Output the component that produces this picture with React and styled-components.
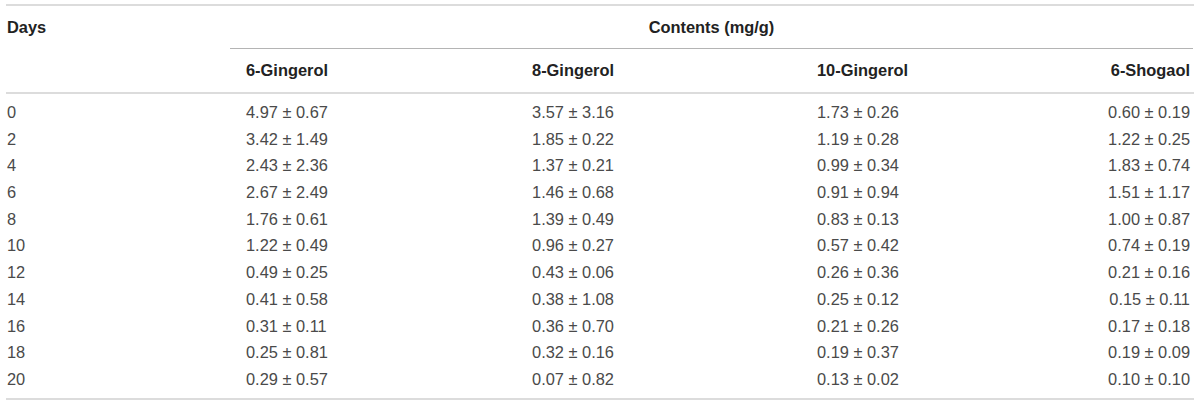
import React from "react";
import styled, { createGlobalStyle } from "styled-components";

const GlobalStyle = createGlobalStyle`
  body {
    margin: 0;
    background: #fff;
    font-family: "Liberation Sans", Arial, sans-serif;
  }
`;

const COLUMNS = "224px 115px 456px 199px 194px";

const Page = styled.div`
  padding: 4px 6px 0 6px;
  width: 1188px;
`;

const Table = styled.div`
  border-top: 2px solid #dcdcdc;
  border-bottom: 2px solid #dcdcdc;
`;

const Head = styled.div`
  display: grid;
  grid-template-columns: ${COLUMNS};
  grid-template-rows: 43px 43px;
  border-bottom: 2px solid #dcdcdc;
  font-size: 16.4px;
  font-weight: 700;
  color: #222;
`;

const DaysHead = styled.div`
  grid-row: 1 / span 2;
  grid-column: 1;
  line-height: 42px;
  padding-left: 1px;
`;

const GroupHead = styled.div`
  grid-row: 1;
  grid-column: 2 / span 4;
  line-height: 42px;
  text-align: center;
  border-bottom: 1px solid #b4b4b4;
  margin-right: 1px;
`;

const Cell = styled.div`
  padding: ${(p) =>
    p.$align === "right" ? "0 4px 0 0" : p.$align === "center" ? "0" : p.$first ? "0 0 0 1px" : "0 0 0 16px"};
  text-align: ${(p) => p.$align || "left"};
  white-space: nowrap;
`;

const ColHead = styled(Cell)`
  grid-row: 2;
  line-height: 43px;
`;

const Body = styled.div`
  display: grid;
  grid-template-columns: ${COLUMNS};
  grid-auto-rows: 26.7px;
  padding: 5px 0 5px 0;
  font-size: 16.4px;
  color: #4a4a4a;
  line-height: 26.7px;
`;

const compounds = [
  { name: "6-Gingerol", align: "left" },
  { name: "8-Gingerol", align: "center" },
  { name: "10-Gingerol", align: "left" },
  { name: "6-Shogaol", align: "right" },
];

const rows = [
  [0, "4.97 ± 0.67", "3.57 ± 3.16", "1.73 ± 0.26", "0.60 ± 0.19"],
  [2, "3.42 ± 1.49", "1.85 ± 0.22", "1.19 ± 0.28", "1.22 ± 0.25"],
  [4, "2.43 ± 2.36", "1.37 ± 0.21", "0.99 ± 0.34", "1.83 ± 0.74"],
  [6, "2.67 ± 2.49", "1.46 ± 0.68", "0.91 ± 0.94", "1.51 ± 1.17"],
  [8, "1.76 ± 0.61", "1.39 ± 0.49", "0.83 ± 0.13", "1.00 ± 0.87"],
  [10, "1.22 ± 0.49", "0.96 ± 0.27", "0.57 ± 0.42", "0.74 ± 0.19"],
  [12, "0.49 ± 0.25", "0.43 ± 0.06", "0.26 ± 0.36", "0.21 ± 0.16"],
  [14, "0.41 ± 0.58", "0.38 ± 1.08", "0.25 ± 0.12", "0.15 ± 0.11"],
  [16, "0.31 ± 0.11", "0.36 ± 0.70", "0.21 ± 0.26", "0.17 ± 0.18"],
  [18, "0.25 ± 0.81", "0.32 ± 0.16", "0.19 ± 0.37", "0.19 ± 0.09"],
  [20, "0.29 ± 0.57", "0.07 ± 0.82", "0.13 ± 0.02", "0.10 ± 0.10"],
];

export default function App() {
  return (
    <Page>
      <GlobalStyle />
      <Table>
        <Head>
          <DaysHead>Days</DaysHead>
          <GroupHead>Contents (mg/g)</GroupHead>
          {compounds.map((c) => (
            <ColHead key={c.name} $align={c.align}>
              {c.name}
            </ColHead>
          ))}
        </Head>
        <Body>
          {rows.map(([day, ...values]) => (
            <React.Fragment key={day}>
              <Cell $first>{day}</Cell>
              {values.map((v, i) => (
                <Cell key={i} $align={compounds[i].align}>
                  {v}
                </Cell>
              ))}
            </React.Fragment>
          ))}
        </Body>
      </Table>
    </Page>
  );
}
